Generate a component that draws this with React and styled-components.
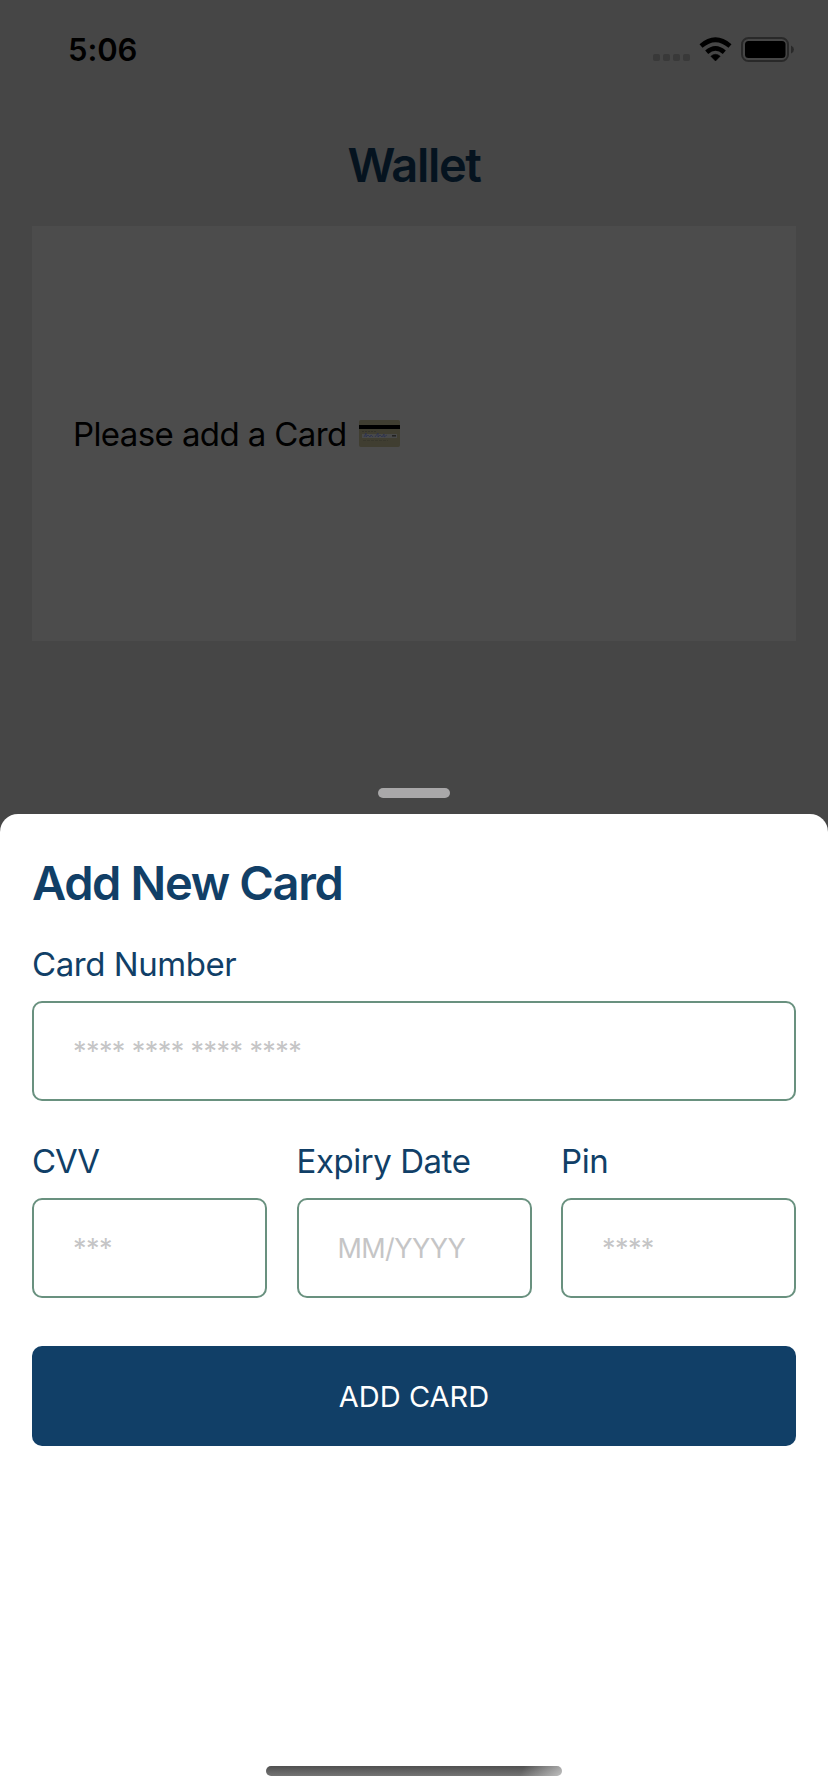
import React from "react";
import styled, { createGlobalStyle } from "styled-components";

const Global = createGlobalStyle`
  * { box-sizing: border-box; }
  body { margin: 0; font-family: Inter, "Liberation Sans", sans-serif; }
`;

const Screen = styled.main`
  width: 828px;
  height: 1792px;
  display: flex;
  flex-direction: column;
  background: #464646;
  overflow: hidden;
`;

const Backdrop = styled.section`
  height: 814px;
  flex: none;
  display: flex;
  flex-direction: column;
  align-items: center;
`;

const StatusBar = styled.header`
  width: 100%;
  height: 100px;
  margin-bottom: 35px;
  padding: 0 34px 0 68px;
  display: flex;
  justify-content: space-between;
  align-items: center;
`;

const Time = styled.span`
  font-size: 31px;
  font-weight: 600;
  line-height: 40px;
  letter-spacing: -0.1px;
`;

const StatusIcons = styled.svg`
  width: 142px;
  height: 26px;
  display: block;
`;

const Heading = styled.h1`
  margin: 0;
  font-size: 47px;
  font-weight: 600;
  line-height: 60px;
  letter-spacing: -1.35px;
  color: ${(p) => p.$color};
`;

const EmptyCard = styled.div`
  width: 764px;
  height: 415px;
  margin-top: 31px;
  padding-left: 41px;
  display: flex;
  align-items: center;
  gap: 12px;
  background: #4c4c4c;
`;

const EmptyText = styled.p`
  margin: 0;
  font-size: 33px;
  line-height: 40px;
  letter-spacing: -0.6px;
  white-space: nowrap;
`;

const CardIcon = styled.svg`
  width: 41px;
  height: 27px;
  display: block;
`;

const Handle = styled.div`
  width: 72px;
  height: 10px;
  margin-top: auto;
  margin-bottom: 16px;
  border-radius: 5px;
  background: #a9a8a9;
`;

const Sheet = styled.section`
  flex: 1;
  display: flex;
  flex-direction: column;
  padding: 39px 32px 16px;
  background: #fff;
  border-radius: 18px 18px 0 0;
`;

const Field = styled.label`
  display: flex;
  flex-direction: column;
  min-width: 0;
  gap: 17px;
  margin-top: ${(p) => p.$top || 0}px;
`;

const FieldLabel = styled.span`
  font-size: 33px;
  line-height: 40px;
  letter-spacing: ${(p) => p.$tracking || -0.45}px;
  color: #113f67;
  white-space: nowrap;
`;

const Input = styled.input`
  width: 100%;
  height: 100px;
  padding: 0 39px;
  border: 2px solid #69917f;
  border-radius: 10px;
  outline: none;
  background: #fff;
  font-family: inherit;
  font-size: 27px;
  letter-spacing: -0.58px;
  &::placeholder { color: #c5c5c6; opacity: 1; }
`;

const FieldRow = styled.div`
  display: grid;
  grid-template-columns: repeat(3, 1fr);
  gap: 29.5px;
  margin-top: 40px;
`;

const SubmitButton = styled.button`
  height: 100px;
  margin-top: 48px;
  padding: 0;
  border: 0;
  border-radius: 10px;
  background: #113f67;
  color: #fff;
  font-family: inherit;
  font-size: 29px;
  letter-spacing: 0.05px;
`;

const HomeIndicator = styled.div`
  width: 296px;
  height: 10px;
  margin: auto auto 0;
  border-radius: 5px;
  background:
    linear-gradient(110deg, transparent 86%, rgba(255, 255, 255, 0.5) 99%),
    linear-gradient(#505050, #747474);
`;

function StatusGlyphs() {
  return (
    <StatusIcons viewBox="0 0 142 26">
      <g fill="#393939">
        <rect x="1" y="17" width="7" height="7" rx="2" />
        <rect x="11" y="17" width="7" height="7" rx="2" />
        <rect x="21" y="17" width="7" height="7" rx="2" />
        <rect x="31" y="17" width="7" height="7" rx="2" />
      </g>
      <path d="M63.5 24 58.8 19.2Q63.5 15.3 68.2 19.2Z" stroke="#000" strokeWidth="0.5" />
      <g fill="none" stroke="#000" strokeWidth="4.6">
        <path d="M54.7 15.3Q63.5 7.5 72.3 15.3" />
        <path d="M49 9Q63.5 -3.5 78 9" />
      </g>
      <rect x="90" y="1" width="46" height="23" rx="6.5" fill="none" stroke="#292929" strokeWidth="2" />
      <rect x="93" y="4" width="40.5" height="17" rx="3.5" />
      <path d="M139 8.5Q142 9.8 142 12.5T139 16.5Z" fill="#292929" />
    </StatusIcons>
  );
}

function CreditCard() {
  return (
    <CardIcon viewBox="0 0 41 27">
      <rect width="41" height="27" rx="2" fill="#403e31" />
      <rect y="5" width="41" height="4" fill="#000" />
      <path d="M3 11.5h14" stroke="#35342c" strokeDasharray="2 1" />
      <rect x="3" y="14" width="35" height="4" fill="#484949" />
      <path d="M5 17l2-4v4l2-2 2 2 1-2 2 2M16 17l3-4v4l2-2 2 2 2-3v3l3-2" fill="none" stroke="#2b3150" strokeWidth="0.8" />
      <path d="M33 15.8h4" stroke="#222" strokeWidth="1.5" />
      <path d="M4 20.5h25" stroke="#38372c" strokeWidth="1" strokeDasharray="3 1" />
    </CardIcon>
  );
}

export default function App() {
  return (
    <Screen>
      <Global />
      <Backdrop>
        <StatusBar>
          <Time>5:06</Time>
          <StatusGlyphs />
        </StatusBar>
        <Heading $color="#05131f">Wallet</Heading>
        <EmptyCard>
          <EmptyText>Please add a Card</EmptyText>
          <CreditCard />
        </EmptyCard>
        <Handle />
      </Backdrop>
      <Sheet>
        <Heading $color="#113f67">Add New Card</Heading>
        <Field $top={31}>
          <FieldLabel>Card Number</FieldLabel>
          <Input placeholder="**** **** **** ****" />
        </Field>
        <FieldRow>
          <Field>
            <FieldLabel $tracking={-1}>CVV</FieldLabel>
            <Input placeholder="***" />
          </Field>
          <Field>
            <FieldLabel>Expiry Date</FieldLabel>
            <Input placeholder="MM/YYYY" />
          </Field>
          <Field>
            <FieldLabel>Pin</FieldLabel>
            <Input placeholder="****" />
          </Field>
        </FieldRow>
        <SubmitButton type="button">ADD CARD</SubmitButton>
        <HomeIndicator />
      </Sheet>
    </Screen>
  );
}
